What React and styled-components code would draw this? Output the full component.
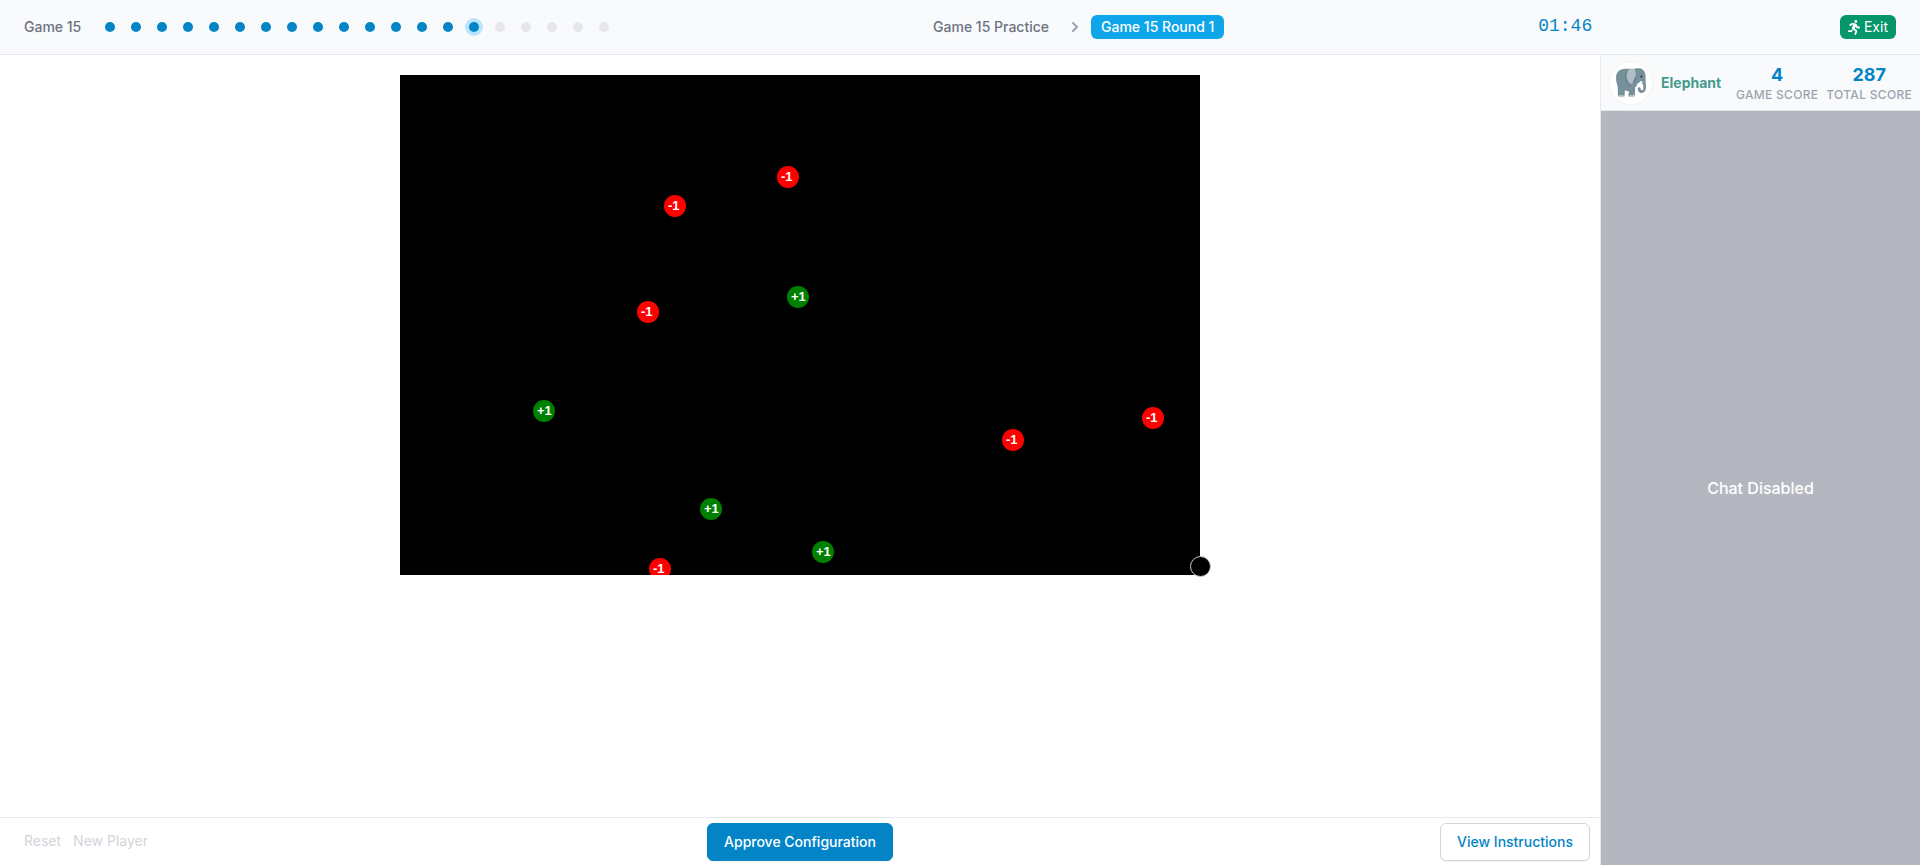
import React from "react";
import styled, { createGlobalStyle } from "styled-components";
import { FaRunning } from "react-icons/fa";

const GlobalStyle = createGlobalStyle`
  *, *::before, *::after { box-sizing: border-box; }
  body {
    margin: 0;
    background: #fff;
    font-family: Inter, "Liberation Sans", sans-serif;
    font-size: 14px;
    line-height: 20px;
  }
  button { font: inherit; cursor: pointer; }
`;

const Page = styled.div`
  display: flex;
  flex-direction: column;
  min-height: 100vh;
`;

const Header = styled.header`
  display: flex;
  align-items: center;
  justify-content: space-between;
  min-height: 55px;
  padding: 0 24px;
  background: #f9fafb;
  border-bottom: 1px solid #e5e7eb;
`;

const Progress = styled.nav`
  display: flex;
  align-items: center;
  gap: 24px;
  padding-right: 66px;
  color: #6b7280;
  font-weight: 500;
`;

const Dots = styled.ol`
  display: flex;
  gap: 16px;
  margin: 0;
  padding: 0;
  list-style: none;
`;

const dotColors = { done: "#0284c7", current: "#0284c7", next: "#e5e7eb" };

const Dot = styled.li`
  width: 10px;
  height: 10px;
  border-radius: 50%;
  background: ${(p) => dotColors[p.$state]};
  box-shadow: ${(p) => (p.$state === "current" ? "0 0 0 4px #bae6fd" : "none")};
`;

const Steps = styled.nav`
  display: flex;
  align-items: center;
  padding-right: 66px;
  font-weight: 500;
`;

const Step = styled.span`
  padding: 2px 10px;
  border-radius: 6px;
  color: ${(p) => (p.$active ? "#fff" : "#6b7280")};
  background: ${(p) => (p.$active ? "#0ea5e9" : "transparent")};
`;

const Chevron = styled.svg`
  width: 20px;
  height: 20px;
  margin: 0 6px;
  fill: #9ca3af;
`;

const Timer = styled.time`
  color: #0284c7;
  font-family: "Liberation Mono", monospace;
  font-size: 18px;
  line-height: 24px;
  padding-bottom: 2px;
`;

const ExitButton = styled.button`
  display: flex;
  align-items: center;
  gap: 4px;
  padding: 2px 8px;
  border: 0;
  border-radius: 6px;
  background: #059669;
  color: #fff;
`;

const RunnerIcon = styled(FaRunning)`
  width: 12px;
  height: 15px;
`;

const Body = styled.div`
  display: flex;
  flex: 1;
`;

const Main = styled.main`
  display: flex;
  flex: 1;
  flex-direction: column;
  min-width: 0;
`;

const Stage = styled.section`
  display: flex;
  flex: 1;
  justify-content: center;
  align-items: flex-start;
  padding: 20px;
`;

const Field = styled.div`
  position: relative;
  width: 800px;
  height: 500px;
  background: #000;
`;

const CoinLayer = styled.div`
  position: absolute;
  inset: 0;
  overflow: hidden;
`;

const Coin = styled.span`
  position: absolute;
  left: ${(p) => p.$x}px;
  top: ${(p) => p.$y}px;
  width: 22px;
  height: 22px;
  padding-left: 4px;
  border-radius: 50%;
  background: ${(p) => (p.$good ? "#008000" : "#ff0000")};
  color: #fff;
  font: bold 13px/22px "Liberation Sans", Arial, sans-serif;
`;

const PlayerDisc = styled.span`
  position: absolute;
  left: 790px;
  top: 481px;
  width: 21px;
  height: 21px;
  border: 1px solid #ccc;
  border-radius: 50%;
  background: #000;
`;

const Footer = styled.footer`
  display: grid;
  grid-template-columns: 1fr auto 1fr;
  align-items: center;
  min-height: 48px;
  padding: 4px 10px;
  border-top: 1px solid #e5e7eb;
`;

const DebugActions = styled.div`
  display: flex;
  gap: 12px;
  padding: 0 0 2px 14px;
`;

const TextButton = styled.button`
  padding: 0;
  border: 0;
  background: none;
  color: #d1d5db;
`;

const Button = styled.button`
  justify-self: ${(p) => (p.$primary ? "center" : "end")};
  padding: 8px 16px;
  border: 1px solid ${(p) => (p.$primary ? "#0284c7" : "#d1d5db")};
  border-radius: 6px;
  background: ${(p) => (p.$primary ? "#0284c7" : "#fff")};
  color: ${(p) => (p.$primary ? "#fff" : "#0284c7")};
  box-shadow: 0 1px 2px rgba(0, 0, 0, 0.05);
  font-weight: 500;
`;

const Sidebar = styled.aside`
  display: flex;
  flex-direction: column;
  width: 320px;
  border-left: 1px solid #e5e7eb;
`;

const Profile = styled.div`
  display: flex;
  align-items: center;
  justify-content: space-between;
  min-height: 56px;
  padding: 5px 8px;
  background: #f9fafb;
  border-bottom: 1px solid #e5e7eb;
`;

const Identity = styled.div`
  display: flex;
  align-items: center;
  gap: 8px;
  color: #459b8e;
  font-weight: 700;
`;

const Avatar = styled.span`
  display: grid;
  place-items: center;
  width: 44px;
  height: 44px;
  border: 1px solid #f3f4f6;
  border-radius: 50%;
  background: #fff;
`;

const Scores = styled.dl`
  display: flex;
  gap: 8px;
  margin: 0;
  text-align: center;
`;

const Score = styled.div`
  display: flex;
  flex-direction: column-reverse;
`;

const ScoreLabel = styled.dt`
  color: #9ca3af;
  font-size: 12px;
  font-weight: 500;
  line-height: 16px;
  letter-spacing: 0.025em;
`;

const ScoreValue = styled.dd`
  margin: 0;
  color: #0284c7;
  font-size: 18px;
  font-weight: 700;
  line-height: 24px;
`;

const Chat = styled.section`
  display: grid;
  flex: 1;
  place-items: center;
  background: #b4b7bf;
  color: #fff;
  font-size: 16px;
  font-weight: 500;
  line-height: 24px;
`;

const CURRENT = 14;
const dots = Array.from({ length: 20 }, (_, i) =>
  i < CURRENT ? "done" : i === CURRENT ? "current" : "next"
);

const coins = [
  { x: 264, y: 120, good: false },
  { x: 377, y: 91, good: false },
  { x: 237, y: 226, good: false },
  { x: 387, y: 211, good: true },
  { x: 133, y: 325, good: true },
  { x: 602, y: 354, good: false },
  { x: 742, y: 332, good: false },
  { x: 300, y: 423, good: true },
  { x: 412, y: 466, good: true },
  { x: 249, y: 483, good: false },
];

function Elephant() {
  return (
    <svg width="30" height="29" viewBox="0 0 91 87" aria-hidden="true">
      <path
        fill="#78909c"
        d="M20 3C7 5 0 15 0 30c0 11 3 17 5 26 1 9 0 19 1 28 0 2 1 3 3 3h14c2 0 3-1 3-3l1-17c4 2 8 3 12 3l-1 14c0 2 1 3 3 3h13c2 0 3-1 3-3l1-26c4-3 7-7 8-11l9-5 5 5c3 5 4 11 3 17-1 4-7 4-8 0-1-3-1-6-5-6-3 0-4 2-4 5 0 7 5 12 12 12 8 0 13-7 13-16 0-11-2-18-1-30C90 12 84 1 70 0c-8 0-13 1-18 3-11-1-22-2-32 0z"
      />
      <path
        fill="#607d8b"
        d="M36 5c-6 10-7 24-2 34 4 8 10 12 15 13-7 1-14-4-18-12-5-11-3-26 5-35z"
      />
      <path
        fill="#b0bec5"
        d="M47 1c-11 3-16 14-14 27 2 12 8 19 14 20 4 0 4-4 6-10 4-3 7-8 8-17C62 9 55-1 47 1z"
      />
      <path fill="#607d8b" d="M56 5c7 7 6 22-2 30l-3 11c6-3 6-8 7-9 6-9 6-24-2-32z" />
      <path fill="#fff" d="M61 49c7-1 11-6 13-11 2 2 4 3 7 3-1 5-3 8-7 9-5 2-9 2-13-1z" />
      <circle cx="77" cy="25" r="3" fill="#263238" />
      <path fill="#eceff1" d="M9 82h5v5H9zM17 82h5v5h-5zM42 82h5v5h-5zM50 82h5v5h-5z" />
    </svg>
  );
}

export default function App() {
  return (
    <>
      <GlobalStyle />
      <Page>
        <Header>
          <Progress aria-label="Games">
            <span>Game 15</span>
            <Dots>
              {dots.map((state, i) => (
                <Dot key={i} $state={state} />
              ))}
            </Dots>
          </Progress>
          <Steps aria-label="Rounds">
            <Step>Game 15 Practice</Step>
            <Chevron viewBox="0 0 20 20" aria-hidden="true">
              <path
                fillRule="evenodd"
                d="M7.293 14.707a1 1 0 010-1.414L10.586 10 7.293 6.707a1 1 0 011.414-1.414l4 4a1 1 0 010 1.414l-4 4a1 1 0 01-1.414 0z"
              />
            </Chevron>
            <Step $active aria-current="step">Game 15 Round 1</Step>
          </Steps>
          <Timer>01:46</Timer>
          <ExitButton type="button">
            <RunnerIcon aria-hidden="true" />
            Exit
          </ExitButton>
        </Header>
        <Body>
          <Main>
            <Stage>
              <Field>
                <CoinLayer>
                  {coins.map((c) => (
                    <Coin key={`${c.x}-${c.y}`} $x={c.x} $y={c.y} $good={c.good}>
                      {c.good ? "+1" : "-1"}
                    </Coin>
                  ))}
                </CoinLayer>
                <PlayerDisc />
              </Field>
            </Stage>
            <Footer>
              <DebugActions>
                <TextButton type="button">Reset</TextButton>
                <TextButton type="button">New Player</TextButton>
              </DebugActions>
              <Button type="button" $primary>Approve Configuration</Button>
              <Button type="button">View Instructions</Button>
            </Footer>
          </Main>
          <Sidebar>
            <Profile>
              <Identity>
                <Avatar><Elephant /></Avatar>
                Elephant
              </Identity>
              <Scores>
                <Score>
                  <ScoreLabel>GAME SCORE</ScoreLabel>
                  <ScoreValue>4</ScoreValue>
                </Score>
                <Score>
                  <ScoreLabel>TOTAL SCORE</ScoreLabel>
                  <ScoreValue>287</ScoreValue>
                </Score>
              </Scores>
            </Profile>
            <Chat>Chat Disabled</Chat>
          </Sidebar>
        </Body>
      </Page>
    </>
  );
}
